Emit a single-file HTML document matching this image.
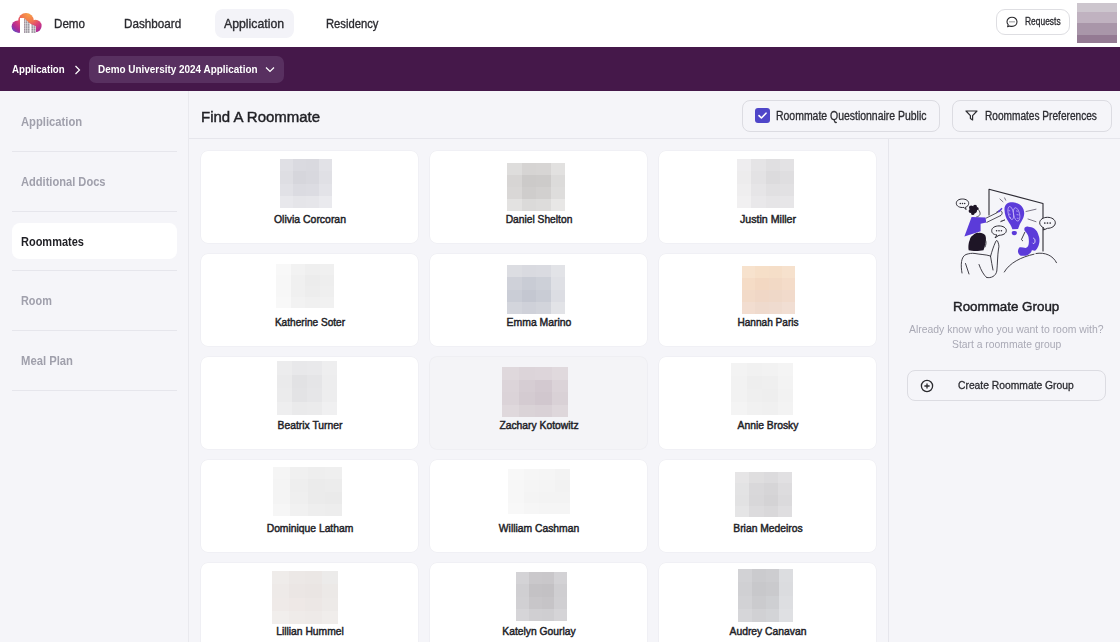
<!DOCTYPE html>
<html><head><meta charset="utf-8">
<style>
*{box-sizing:border-box;margin:0;padding:0}
html,body{width:1120px;height:642px;overflow:hidden;background:#f5f5f9;font-family:"Liberation Sans",sans-serif;color:#1f1f23}
.abs{position:absolute}
.t{position:absolute;white-space:nowrap;line-height:1;transform-origin:0 0}
.card{position:absolute;width:217px;height:92px;border-radius:7px;box-shadow:0 0 0 0.6px #ececf1}
.av{position:absolute;display:grid;filter:blur(0.6px)}
.av i{display:block}
</style></head><body>
<div class="abs" style="left:0;top:0;width:1120px;height:47px;background:#fff"></div>
<div class="abs" style="left:0;top:47px;width:1120px;height:44px;background:#45184a"></div>
<!-- logo -->
<svg class="abs" style="left:10px;top:12px" width="32" height="22" viewBox="0 0 32 22">
  <defs>
    <radialGradient id="lg" gradientUnits="userSpaceOnUse" cx="19" cy="2" r="25">
      <stop offset="0" stop-color="#f6a048"/>
      <stop offset="0.3" stop-color="#f2784f"/>
      <stop offset="0.55" stop-color="#d93e7c"/>
      <stop offset="0.78" stop-color="#aa2a98"/>
      <stop offset="1" stop-color="#3b63d8"/>
    </radialGradient>
    <pattern id="st" width="2" height="1.7" patternUnits="userSpaceOnUse">
      <rect x="0" y="0" width="2" height="1.7" fill="#fff"/>
      <rect x="0.1" y="0.3" width="1.4" height="0.9" fill="#2a2030" opacity="0.85"/>
    </pattern>
  </defs>
  <circle cx="7.6" cy="14.6" r="6" fill="url(#lg)"/>
  <circle cx="16" cy="8.8" r="7.8" fill="url(#lg)"/>
  <circle cx="25.4" cy="14" r="6.2" fill="url(#lg)"/>
  <rect x="7.6" y="12" width="18" height="8.8" fill="url(#lg)"/>
  <path d="M10 21 L10 6 L14.1 6 L14.1 21 Z" fill="#fff"/>
  <path d="M14.1 21 L14.1 6 L20 11.4 L20 21 Z" fill="url(#st)"/>
  <path d="M20 21 L20 11.6 L21 12 L21 21 Z" fill="#fff"/>
  <path d="M21 21 L21 12 L26 14.2 L26 21 Z" fill="url(#st)"/>
</svg>

<div class="abs" style="left:215px;top:9px;width:79px;height:29px;background:#f3f3f8;border-radius:8px"></div>
<div class="abs" style="left:996px;top:9px;width:74px;height:26px;border:1px solid #dedee2;border-radius:9px;background:#fff"></div>
<svg class="abs" style="left:1005px;top:16px" width="14" height="12" viewBox="0 0 14 12">
  <path d="M2.6 10.8 L3.2 8.6 C2.4 7.8 2 6.8 2 5.8 C2 3.2 4.2 1.2 7 1.2 C9.8 1.2 12 3.2 12 5.8 C12 8.4 9.8 10.4 7 10.4 C6.1 10.4 5.3 10.2 4.6 9.9 Z" fill="none" stroke="#2a2a2e" stroke-width="1.1" stroke-linejoin="round"/>
  <circle cx="5" cy="5.8" r="0.6" fill="#2a2a2e"/><circle cx="7" cy="5.8" r="0.6" fill="#2a2a2e"/><circle cx="9" cy="5.8" r="0.6" fill="#2a2a2e"/>
</svg>
<div class="abs" style="left:1077px;top:3px;width:40px;height:40px;background:linear-gradient(#cdc6ce 0,#cdc6ce 22%,#c0b2c0 22%,#c0b2c0 50%,#a996a9 50%,#a996a9 79%,#947a93 79%)"></div>
<!-- breadcrumb -->
<svg class="abs" style="left:74px;top:65px" width="7" height="10" viewBox="0 0 7 10"><path d="M1.5 1 L5.5 5 L1.5 9" fill="none" stroke="#fff" stroke-width="1.2"/></svg>
<div class="abs" style="left:89px;top:56px;width:195px;height:27px;background:#583060;border-radius:7px"></div>
<svg class="abs" style="left:265px;top:66px" width="10" height="7" viewBox="0 0 10 7"><path d="M1 1.5 L5 5.5 L9 1.5" fill="none" stroke="#fff" stroke-width="1.2"/></svg>
<!-- sidebar -->
<div class="abs" style="left:188px;top:91px;width:1px;height:551px;background:#e9e9ee"></div>
<div class="abs" style="left:12px;top:151px;width:165px;height:1px;background:#e6e6ec"></div>
<div class="abs" style="left:12px;top:211px;width:165px;height:1px;background:#e6e6ec"></div>
<div class="abs" style="left:12px;top:223px;width:165px;height:36px;background:#fff;border-radius:8px"></div>
<div class="abs" style="left:12px;top:270px;width:165px;height:1px;background:#e6e6ec"></div>
<div class="abs" style="left:12px;top:330px;width:165px;height:1px;background:#e6e6ec"></div>
<div class="abs" style="left:12px;top:390px;width:165px;height:1px;background:#e6e6ec"></div>
<!-- header -->
<div class="abs" style="left:189px;top:138px;width:931px;height:1px;background:#e6e6ec"></div>
<div class="abs" style="left:742px;top:100px;width:198px;height:32px;border:1px solid #dcdce2;border-radius:8px"></div>
<div class="abs" style="left:755px;top:108px;width:15px;height:15px;background:#4f46c9;border-radius:3px"></div>
<svg class="abs" style="left:755px;top:108px" width="15" height="15" viewBox="0 0 15 15"><path d="M4 7.6 L6.4 10 L11 5.2" fill="none" stroke="#fff" stroke-width="1.6" stroke-linecap="round" stroke-linejoin="round"/></svg>
<div class="abs" style="left:952px;top:100px;width:160px;height:32px;border:1px solid #dcdce2;border-radius:8px"></div>
<svg class="abs" style="left:965px;top:110px" width="13" height="11" viewBox="0 0 13 11"><path d="M1 1 L12 1 L7.6 5.6 L7.6 10 L5.4 8.6 L5.4 5.6 Z" fill="none" stroke="#2a2a2e" stroke-width="1.2" stroke-linejoin="round"/></svg>
<!-- right panel -->
<div class="abs" style="left:888px;top:139px;width:1px;height:503px;background:#e6e6ec"></div>
<div class="abs" style="left:907px;top:370px;width:199px;height:31px;border:1px solid #dcdce2;border-radius:8px"></div>
<svg class="abs" style="left:920px;top:379px" width="14" height="14" viewBox="0 0 14 14"><circle cx="7" cy="7" r="5.6" fill="none" stroke="#2a2a2e" stroke-width="1.3"/><path d="M7 4.4 V9.6 M4.4 7 H9.6" stroke="#2a2a2e" stroke-width="1.3"/></svg>
<svg class="abs" style="left:945px;top:180px" width="120" height="105" viewBox="945 180 120 105">
 <g fill="none" stroke="#2c2a33" stroke-width="1" stroke-linecap="round" stroke-linejoin="round">
  <polyline points="989,215 989,189.3 1043,203.5 1043,251" stroke-width="1.1"/>
  <line x1="1026" y1="211.5" x2="1036" y2="209.2" stroke="#5a5568" stroke-width="0.8"/>
  <line x1="1028" y1="219" x2="1036" y2="221.7" stroke="#5a5568" stroke-width="0.8"/>
  <line x1="999.9" y1="199" x2="1003" y2="201.8" stroke="#5a5568" stroke-width="0.8"/>
  <line x1="1004.6" y1="197.9" x2="1005.7" y2="200.2" stroke="#5a5568" stroke-width="0.8"/>
  <line x1="1001" y1="221.2" x2="1004.6" y2="220" stroke="#5a5568" stroke-width="0.8"/>
 </g>
 <!-- bulb -->
 <path d="M1004.5,210 C1004,204 1008.5,202 1013,202.3 C1019.5,202.8 1024.5,207.5 1024.2,213.5 C1024,218.5 1021,221.5 1019.5,225 C1018.8,227 1018.3,228.5 1018,229 L1012.4,229.3 C1011.5,226 1009.5,223.5 1008,221 C1006,218 1004.7,214.5 1004.5,210 Z" fill="#5b3bd9"/>
 <path d="M1011.8,232 C1012.5,230.8 1016,230.8 1016.8,232 C1017.2,233.5 1016.3,235.3 1014.3,235.3 C1012.3,235.3 1011.4,233.5 1011.8,232 Z" fill="#5b3bd9"/>
 <g fill="none" stroke="#c9b9f7" stroke-width="0.75">
  <ellipse cx="1010.8" cy="213" rx="2.6" ry="6.6" transform="rotate(-12 1010.8 213)"/>
  <ellipse cx="1016.6" cy="214.4" rx="3" ry="6.8" transform="rotate(-12 1016.6 214.4)"/>
  <path d="M1008.6,210.5 l1.6,0.4 M1008.8,214 l1.8,0.3 M1009.4,217.5 l1.6,0.2 M1016,210.8 l1.8,0.6 M1016.6,214.6 l2,0.3 M1016.8,218.2 l1.8,0.2"/>
 </g>
 <!-- bubbles -->
 <g fill="#f5f5f9" stroke="#2c2a33" stroke-width="1">
  <path d="M964,207.4 C959.5,208 956.3,206 956.3,203.3 C956.3,200.5 959,199 962.5,199 C966,199 968.7,200.8 968.7,203.3 C968.7,205.2 967.5,206.6 965.5,207.2 L966,209.6 Z"/>
  <path d="M997,235 C993,234.5 991.7,232.8 991.7,230.6 C991.7,227.8 995,225.9 999,225.9 C1003,225.9 1006.3,227.8 1006.3,230.6 C1006.3,233.4 1003,235.3 999,235.3 L995,237.9 Z"/>
  <path d="M1044,228 C1041.5,226.8 1039.7,225 1039.7,222.8 C1039.7,219.6 1043.2,217.3 1047.5,217.3 C1051.8,217.3 1055.3,219.6 1055.3,222.8 C1055.3,226 1051.8,228.3 1047.5,228.3 L1043.5,230 Z"/>
 </g>
 <g fill="#2c2a33">
  <circle cx="960.3" cy="203.5" r="0.75"/><circle cx="962.5" cy="203.5" r="0.75"/><circle cx="964.7" cy="203.5" r="0.75"/>
  <circle cx="996.6" cy="230.8" r="0.8"/><circle cx="999" cy="230.8" r="0.8"/><circle cx="1001.4" cy="230.8" r="0.8"/>
  <circle cx="1044.8" cy="223" r="0.85"/><circle cx="1047.5" cy="223" r="0.85"/><circle cx="1050.2" cy="223" r="0.85"/>
 </g>
 <!-- small person -->
 <path d="M971.6,216.9 L985.6,217.5 L986.2,222.5 L980.6,223.7 L980.6,231.2 L964.4,236.6 Z" fill="#5b3bd9"/>
 <g fill="none" stroke="#2c2a33" stroke-width="0.8" stroke-linecap="round" stroke-linejoin="round">
  <path d="M986.2,218.1 L997.5,212.5"/>
  <path d="M986.9,222.3 L1000.6,215.6"/>
  <path d="M996.5,212.2 C998.5,210.5 1001,210 1002,212 C1002.5,213.5 1001.8,215 1000.6,215.6"/>
  <path d="M978.1,209.4 C979.8,211 980.4,213 980,214.4 C979.2,216 977.8,216.8 976.8,216.8"/>
  <path d="M1000.8,221.6 L1004.6,220"/>
 </g>
 <line x1="998.7" y1="211.6" x2="1001.6" y2="208.7" stroke="#5b3bd9" stroke-width="1.6" stroke-linecap="round"/>
 <g fill="#1e1526">
  <circle cx="973.7" cy="210" r="3.4"/>
  <circle cx="971.2" cy="207.6" r="2.2"/><circle cx="975" cy="206.8" r="2"/><circle cx="970.6" cy="211" r="2"/><circle cx="972.8" cy="213.4" r="1.7"/><circle cx="977" cy="208.5" r="1.6"/>
 </g>
 <!-- woman -->
 <path d="M968.7,250.3 C968,246 968.8,242 969.6,240.4 C970.2,237.5 971.5,236 973,235.3 C974.5,233.5 976.5,232.6 978.3,232.9 C980.8,232.3 983.8,233.4 985.2,235.3 C986.3,237.5 986,240 985.6,242.1 C985.2,245 984.4,248 983.5,250.3 C979,251.2 972.5,251.2 968.7,250.3 Z" fill="#1e1526"/>
 <g fill="none" stroke="#2c2a33" stroke-width="0.9" stroke-linecap="round" stroke-linejoin="round">
  <path d="M985.5,240 C986.5,242 986,245 985,247"/>
  <path d="M962,273 C960.5,265 961,256.5 966,254.5 C969,253.5 972,253 975,253.5 C980,254.5 986,254.5 990.5,256 C991.5,261 992,266 993,270"/>
  <path d="M990.5,256.5 C992,251 993.5,246.5 995.5,242 C996,240.5 997,240 997.5,241 C998.5,243.5 999.5,246 998.5,249 C997.5,255 997.5,265 996.8,271 C996,276 991,278.5 986.7,277.5"/>
  <path d="M965.5,263.5 L969,274"/>
  <path d="M979,264.5 C981,270 983.5,275 986.7,277.5"/>
 </g>
 <!-- man -->
 <path d="M1024.8,227.6 C1026,226.6 1027,226.5 1028.3,226.7 C1030.5,226.8 1032.5,227.3 1034.2,228.4 C1036.5,230.2 1038,232.5 1038.5,235.3 C1039.5,237.5 1039.6,240 1039.4,242.1 C1039,245 1038,247.3 1036.8,249 L1035.1,250.7 C1033.5,250.5 1032.5,250 1031.7,250.5 C1031.5,251.5 1031,252.5 1030,253.3 C1028.5,255 1026.5,255.8 1024.8,255.8 C1022.5,256 1020.5,255.8 1019.7,255 C1018.3,253.5 1017.8,252 1018,250.7 C1018.3,249 1019,247.8 1019.7,247.3 C1021.5,247 1023.5,247.6 1025.7,248.1 C1027,247.5 1028,246.5 1028.5,245 C1029,243 1029,240 1028.5,237 C1028,234.5 1026.5,232.5 1024.8,231 C1024.2,230 1024.2,228.5 1024.8,227.6 Z" fill="#5b3bd9"/>
 <path d="M1033.2,238 C1034.8,238.5 1035.5,240.5 1034.8,242.5 C1034.2,243.8 1033,243.8 1032.5,242.8" fill="none" stroke="#f5f5f9" stroke-width="0.8"/>
 <g fill="none" stroke="#2c2a33" stroke-width="0.9" stroke-linecap="round" stroke-linejoin="round">
  <path d="M1024.8,232.3 L1021.4,239.6 L1022.7,240.8"/>
  <path d="M1004.3,272 C1009.5,263 1021,257 1034,254.2"/>
  <path d="M1036,253.5 C1045,252 1053,255.5 1056.5,262.7"/>
 </g>
</svg>

<div class="card" style="left:201px;top:151px;background:#ffffff;"></div>
<div class="av" style="left:280px;top:159px;width:52px;height:49px;grid-template-columns:repeat(4,1fr);grid-template-rows:repeat(4,1fr)"><i style="background:#e0e0e5"></i><i style="background:#dadae0"></i><i style="background:#d9d9df"></i><i style="background:#e2e2e7"></i><i style="background:#dedee3"></i><i style="background:#d6d6dc"></i><i style="background:#d8d8de"></i><i style="background:#e0e0e5"></i><i style="background:#e1e1e6"></i><i style="background:#dbdbe1"></i><i style="background:#dcdce2"></i><i style="background:#e3e3e8"></i><i style="background:#e8e8ec"></i><i style="background:#e5e5e9"></i><i style="background:#e6e6ea"></i><i style="background:#eaeaee"></i></div>
<div class="t" id="nm00" style="left:309.50px;top:213.59px;font-size:10.6px;font-weight:400;color:#222227;-webkit-text-stroke:0.45px #222227;transform-origin:50% 0;transform:translateX(-50%) scaleX(0.9863)">Olivia Corcoran</div>
<div class="card" style="left:430px;top:151px;background:#ffffff;"></div>
<div class="av" style="left:507px;top:163px;width:58px;height:48px;grid-template-columns:repeat(4,1fr);grid-template-rows:repeat(4,1fr)"><i style="background:#dedddc"></i><i style="background:#d6d4d3"></i><i style="background:#d7d5d4"></i><i style="background:#e2e1e0"></i><i style="background:#d7d5d4"></i><i style="background:#cccac9"></i><i style="background:#cdcbca"></i><i style="background:#dcdbda"></i><i style="background:#d9d7d6"></i><i style="background:#cfcdcc"></i><i style="background:#d2d0cf"></i><i style="background:#dedddc"></i><i style="background:#e3e2e1"></i><i style="background:#dbdad9"></i><i style="background:#dddcdb"></i><i style="background:#e8e7e6"></i></div>
<div class="t" id="nm01" style="left:538.50px;top:213.59px;font-size:10.6px;font-weight:400;color:#222227;-webkit-text-stroke:0.45px #222227;transform-origin:50% 0;transform:translateX(-50%) scaleX(0.9681)">Daniel Shelton</div>
<div class="card" style="left:659px;top:151px;background:#ffffff;"></div>
<div class="av" style="left:737px;top:159px;width:57px;height:49px;grid-template-columns:repeat(4,1fr);grid-template-rows:repeat(4,1fr)"><i style="background:#eeedef"></i><i style="background:#e5e4e6"></i><i style="background:#e0dfe1"></i><i style="background:#e3e2e4"></i><i style="background:#edeced"></i><i style="background:#e3e2e4"></i><i style="background:#dcdbdd"></i><i style="background:#dfdee0"></i><i style="background:#efeeef"></i><i style="background:#e6e5e7"></i><i style="background:#e1e0e2"></i><i style="background:#e2e1e3"></i><i style="background:#f1f0f1"></i><i style="background:#e9e8ea"></i><i style="background:#e6e5e7"></i><i style="background:#e7e6e8"></i></div>
<div class="t" id="nm02" style="left:767.50px;top:213.59px;font-size:10.6px;font-weight:400;color:#222227;-webkit-text-stroke:0.45px #222227;transform-origin:50% 0;transform:translateX(-50%) scaleX(1.0036)">Justin Miller</div>
<div class="card" style="left:201px;top:254px;background:#ffffff;"></div>
<div class="av" style="left:276px;top:264px;width:58px;height:44px;grid-template-columns:repeat(4,1fr);grid-template-rows:repeat(4,1fr)"><i style="background:#f8f8f8"></i><i style="background:#f2f2f2"></i><i style="background:#efefef"></i><i style="background:#f0f0f0"></i><i style="background:#f7f7f7"></i><i style="background:#f0f0f0"></i><i style="background:#ececec"></i><i style="background:#eeeeee"></i><i style="background:#f7f7f7"></i><i style="background:#f0f0f0"></i><i style="background:#ededed"></i><i style="background:#efefef"></i><i style="background:#f8f8f8"></i><i style="background:#f2f2f2"></i><i style="background:#f0f0f0"></i><i style="background:#f1f1f1"></i></div>
<div class="t" id="nm10" style="left:309.50px;top:316.59px;font-size:10.6px;font-weight:400;color:#222227;-webkit-text-stroke:0.45px #222227;transform-origin:50% 0;transform:translateX(-50%) scaleX(0.9541)">Katherine Soter</div>
<div class="card" style="left:430px;top:254px;background:#ffffff;"></div>
<div class="av" style="left:507px;top:265px;width:58px;height:49px;grid-template-columns:repeat(4,1fr);grid-template-rows:repeat(4,1fr)"><i style="background:#dcdde2"></i><i style="background:#d9dae0"></i><i style="background:#dadbe1"></i><i style="background:#e2e3e7"></i><i style="background:#cfd1d9"></i><i style="background:#c9ccd5"></i><i style="background:#cdd0d8"></i><i style="background:#dfe0e5"></i><i style="background:#cacdd6"></i><i style="background:#c4c7d1"></i><i style="background:#c9ccd5"></i><i style="background:#dcdde3"></i><i style="background:#d3d5dc"></i><i style="background:#cfd1d9"></i><i style="background:#d2d4db"></i><i style="background:#e2e3e7"></i></div>
<div class="t" id="nm11" style="left:538.50px;top:316.59px;font-size:10.6px;font-weight:400;color:#222227;-webkit-text-stroke:0.45px #222227;transform-origin:50% 0;transform:translateX(-50%) scaleX(0.9833)">Emma Marino</div>
<div class="card" style="left:659px;top:254px;background:#ffffff;"></div>
<div class="av" style="left:742px;top:266px;width:53px;height:48px;grid-template-columns:repeat(4,1fr);grid-template-rows:repeat(4,1fr)"><i style="background:#f7e2cd"></i><i style="background:#f6dfc8"></i><i style="background:#f5dec8"></i><i style="background:#f6e1cd"></i><i style="background:#f5dcc6"></i><i style="background:#f3d8c2"></i><i style="background:#f2d9c5"></i><i style="background:#f4dcc9"></i><i style="background:#f2dac8"></i><i style="background:#f0d7c6"></i><i style="background:#efd8c8"></i><i style="background:#f1dacb"></i><i style="background:#f2ddd0"></i><i style="background:#efdacd"></i><i style="background:#efdbcf"></i><i style="background:#f1ded3"></i></div>
<div class="t" id="nm12" style="left:767.50px;top:316.59px;font-size:10.6px;font-weight:400;color:#222227;-webkit-text-stroke:0.45px #222227;transform-origin:50% 0;transform:translateX(-50%) scaleX(0.9516)">Hannah Paris</div>
<div class="card" style="left:201px;top:357px;background:#ffffff;"></div>
<div class="av" style="left:277px;top:361px;width:60px;height:54px;grid-template-columns:repeat(4,1fr);grid-template-rows:repeat(4,1fr)"><i style="background:#ececed"></i><i style="background:#e8e8ea"></i><i style="background:#e9e9eb"></i><i style="background:#eeeeef"></i><i style="background:#eaeaeb"></i><i style="background:#e2e2e4"></i><i style="background:#e5e5e7"></i><i style="background:#ededee"></i><i style="background:#ebebec"></i><i style="background:#e3e3e5"></i><i style="background:#e6e6e8"></i><i style="background:#ededee"></i><i style="background:#eeeeef"></i><i style="background:#eaeaeb"></i><i style="background:#ebebec"></i><i style="background:#f0f0f1"></i></div>
<div class="t" id="nm20" style="left:309.50px;top:419.59px;font-size:10.6px;font-weight:400;color:#222227;-webkit-text-stroke:0.45px #222227;transform-origin:50% 0;transform:translateX(-50%) scaleX(0.9745)">Beatrix Turner</div>
<div class="card" style="left:430px;top:357px;background:#f4f4f7;box-shadow:0 0 0 0.8px #ededf1;"></div>
<div class="av" style="left:502px;top:367px;width:66px;height:50px;grid-template-columns:repeat(4,1fr);grid-template-rows:repeat(4,1fr)"><i style="background:#dfd8dc"></i><i style="background:#dcd4d9"></i><i style="background:#ddd5da"></i><i style="background:#e0d9dd"></i><i style="background:#dcd4d9"></i><i style="background:#d6cdd3"></i><i style="background:#d3c9d0"></i><i style="background:#dbd3d8"></i><i style="background:#dbd3d8"></i><i style="background:#d4cbd1"></i><i style="background:#d1c7ce"></i><i style="background:#d9d1d6"></i><i style="background:#dfd8dc"></i><i style="background:#dad3d7"></i><i style="background:#d9d1d6"></i><i style="background:#ded7db"></i></div>
<div class="t" id="nm21" style="left:538.50px;top:419.59px;font-size:10.6px;font-weight:400;color:#222227;-webkit-text-stroke:0.45px #222227;transform-origin:50% 0;transform:translateX(-50%) scaleX(0.9745)">Zachary Kotowitz</div>
<div class="card" style="left:659px;top:357px;background:#ffffff;"></div>
<div class="av" style="left:731px;top:363px;width:62px;height:52px;grid-template-columns:repeat(4,1fr);grid-template-rows:repeat(4,1fr)"><i style="background:#f3f3f3"></i><i style="background:#f1f1f1"></i><i style="background:#f2f2f2"></i><i style="background:#f4f4f4"></i><i style="background:#f2f2f2"></i><i style="background:#eeeeee"></i><i style="background:#efefef"></i><i style="background:#f3f3f3"></i><i style="background:#f2f2f2"></i><i style="background:#efefef"></i><i style="background:#eeeeee"></i><i style="background:#f2f2f2"></i><i style="background:#f4f4f4"></i><i style="background:#f1f1f1"></i><i style="background:#f0f0f0"></i><i style="background:#f3f3f3"></i></div>
<div class="t" id="nm22" style="left:767.50px;top:419.59px;font-size:10.6px;font-weight:400;color:#222227;-webkit-text-stroke:0.45px #222227;transform-origin:50% 0;transform:translateX(-50%) scaleX(0.9745)">Annie Brosky</div>
<div class="card" style="left:201px;top:460px;background:#ffffff;"></div>
<div class="av" style="left:273px;top:467px;width:69px;height:49px;grid-template-columns:repeat(4,1fr);grid-template-rows:repeat(4,1fr)"><i style="background:#f5f5f5"></i><i style="background:#f0f0f0"></i><i style="background:#eeeeee"></i><i style="background:#efefef"></i><i style="background:#f4f4f4"></i><i style="background:#eeeeee"></i><i style="background:#ebebeb"></i><i style="background:#ececec"></i><i style="background:#f4f4f4"></i><i style="background:#efefef"></i><i style="background:#ebebeb"></i><i style="background:#eaeaea"></i><i style="background:#f6f6f6"></i><i style="background:#f1f1f1"></i><i style="background:#eeeeee"></i><i style="background:#ededed"></i></div>
<div class="t" id="nm30" style="left:309.50px;top:522.59px;font-size:10.6px;font-weight:400;color:#222227;-webkit-text-stroke:0.45px #222227;transform-origin:50% 0;transform:translateX(-50%) scaleX(0.9745)">Dominique Latham</div>
<div class="card" style="left:430px;top:460px;background:#ffffff;"></div>
<div class="av" style="left:508px;top:469px;width:62px;height:45px;grid-template-columns:repeat(4,1fr);grid-template-rows:repeat(4,1fr)"><i style="background:#f8f8f8"></i><i style="background:#f6f6f6"></i><i style="background:#f5f5f5"></i><i style="background:#f3f3f3"></i><i style="background:#f7f7f7"></i><i style="background:#f5f5f5"></i><i style="background:#f4f4f4"></i><i style="background:#f2f2f2"></i><i style="background:#f7f7f7"></i><i style="background:#f4f4f4"></i><i style="background:#f3f3f3"></i><i style="background:#f3f3f3"></i><i style="background:#f8f8f8"></i><i style="background:#f6f6f6"></i><i style="background:#f5f5f5"></i><i style="background:#f5f5f5"></i></div>
<div class="t" id="nm31" style="left:538.50px;top:522.59px;font-size:10.6px;font-weight:400;color:#222227;-webkit-text-stroke:0.45px #222227;transform-origin:50% 0;transform:translateX(-50%) scaleX(0.9745)">William Cashman</div>
<div class="card" style="left:659px;top:460px;background:#ffffff;"></div>
<div class="av" style="left:735px;top:472px;width:57px;height:45px;grid-template-columns:repeat(4,1fr);grid-template-rows:repeat(4,1fr)"><i style="background:#e6e5e6"></i><i style="background:#dfdedf"></i><i style="background:#dcdbdd"></i><i style="background:#e1e0e2"></i><i style="background:#e3e3e4"></i><i style="background:#d9d8da"></i><i style="background:#d6d5d7"></i><i style="background:#dddcde"></i><i style="background:#e2e2e3"></i><i style="background:#d8d7d9"></i><i style="background:#d4d3d5"></i><i style="background:#dbdadc"></i><i style="background:#e5e5e6"></i><i style="background:#dcdbdd"></i><i style="background:#d9d8da"></i><i style="background:#dfdee0"></i></div>
<div class="t" id="nm32" style="left:767.50px;top:522.59px;font-size:10.6px;font-weight:400;color:#222227;-webkit-text-stroke:0.45px #222227;transform-origin:50% 0;transform:translateX(-50%) scaleX(0.9745)">Brian Medeiros</div>
<div class="card" style="left:201px;top:563px;background:#ffffff;"></div>
<div class="av" style="left:272px;top:571px;width:66px;height:53px;grid-template-columns:repeat(4,1fr);grid-template-rows:repeat(4,1fr)"><i style="background:#efecea"></i><i style="background:#ece8e6"></i><i style="background:#ebe7e5"></i><i style="background:#ecebea"></i><i style="background:#eeeae8"></i><i style="background:#ebe6e4"></i><i style="background:#eae5e3"></i><i style="background:#ece9e7"></i><i style="background:#efeae8"></i><i style="background:#eee8e6"></i><i style="background:#ece7e5"></i><i style="background:#edeae8"></i><i style="background:#f1eeec"></i><i style="background:#efebe9"></i><i style="background:#eeeae8"></i><i style="background:#f0edeb"></i></div>
<div class="t" id="nm40" style="left:309.50px;top:625.59px;font-size:10.6px;font-weight:400;color:#222227;-webkit-text-stroke:0.45px #222227;transform-origin:50% 0;transform:translateX(-50%) scaleX(0.9745)">Lillian Hummel</div>
<div class="card" style="left:430px;top:563px;background:#ffffff;"></div>
<div class="av" style="left:516px;top:572px;width:51px;height:49px;grid-template-columns:repeat(4,1fr);grid-template-rows:repeat(4,1fr)"><i style="background:#d4d3d6"></i><i style="background:#cac8cb"></i><i style="background:#c9c7ca"></i><i style="background:#d3d2d5"></i><i style="background:#d0cfd2"></i><i style="background:#c4c2c5"></i><i style="background:#c3c1c4"></i><i style="background:#cfced1"></i><i style="background:#d1d0d3"></i><i style="background:#c8c6c9"></i><i style="background:#c6c4c7"></i><i style="background:#d0cfd2"></i><i style="background:#d6d5d8"></i><i style="background:#d0cfd2"></i><i style="background:#cfced1"></i><i style="background:#d5d4d7"></i></div>
<div class="t" id="nm41" style="left:538.50px;top:625.59px;font-size:10.6px;font-weight:400;color:#222227;-webkit-text-stroke:0.45px #222227;transform-origin:50% 0;transform:translateX(-50%) scaleX(0.9745)">Katelyn Gourlay</div>
<div class="card" style="left:659px;top:563px;background:#ffffff;"></div>
<div class="av" style="left:738px;top:569px;width:55px;height:53px;grid-template-columns:repeat(4,1fr);grid-template-rows:repeat(4,1fr)"><i style="background:#d2d2d5"></i><i style="background:#cbcbce"></i><i style="background:#cdcdd0"></i><i style="background:#dcdde0"></i><i style="background:#d0d0d3"></i><i style="background:#c8c8cb"></i><i style="background:#cacacd"></i><i style="background:#dbdcdf"></i><i style="background:#d2d2d5"></i><i style="background:#cbcbce"></i><i style="background:#cecfd2"></i><i style="background:#dddee1"></i><i style="background:#d6d6d9"></i><i style="background:#d1d1d4"></i><i style="background:#d3d4d7"></i><i style="background:#dfe0e3"></i></div>
<div class="t" id="nm42" style="left:767.50px;top:625.59px;font-size:10.6px;font-weight:400;color:#222227;-webkit-text-stroke:0.45px #222227;transform-origin:50% 0;transform:translateX(-50%) scaleX(0.9745)">Audrey Canavan</div>
<div class="t" id="n1" style="left:53.70px;top:16.95px;font-size:13px;font-weight:400;color:#2b2b30;-webkit-text-stroke:0.35px #2b2b30;transform:scaleX(0.8943)">Demo</div>
<div class="t" id="n2" style="left:124.25px;top:17.15px;font-size:13px;font-weight:400;color:#2b2b30;-webkit-text-stroke:0.35px #2b2b30;transform:scaleX(0.8984)">Dashboard</div>
<div class="t" id="n3" style="left:223.75px;top:17.15px;font-size:13px;font-weight:400;color:#2b2b30;-webkit-text-stroke:0.35px #2b2b30;transform:scaleX(0.9453)">Application</div>
<div class="t" id="n4" style="left:326.00px;top:17.15px;font-size:13px;font-weight:400;color:#2b2b30;-webkit-text-stroke:0.35px #2b2b30;transform:scaleX(0.8648)">Residency</div>
<div class="t" id="req" style="left:1024.60px;top:17.10px;font-size:10px;font-weight:400;color:#2b2b30;-webkit-text-stroke:0.3px #2b2b30;transform:scaleX(0.8429)">Requests</div>
<div class="t" id="b1" style="left:12.00px;top:63.52px;font-size:11.5px;font-weight:700;color:#ffffff;transform:scaleX(0.8413)">Application</div>
<div class="t" id="b2" style="left:98.00px;top:63.52px;font-size:11.5px;font-weight:700;color:#ffffff;transform:scaleX(0.8627)">Demo University 2024 Application</div>
<div class="t" id="s1" style="left:20.90px;top:115.50px;font-size:12px;font-weight:700;color:#a0a0ac;transform:scaleX(0.9369)">Application</div>
<div class="t" id="s2" style="left:21.20px;top:175.50px;font-size:12px;font-weight:700;color:#a0a0ac;transform:scaleX(0.9253)">Additional Docs</div>
<div class="t" id="s3" style="left:20.90px;top:235.60px;font-size:12px;font-weight:700;color:#1f1f24;transform:scaleX(0.9159)">Roommates</div>
<div class="t" id="s4" style="left:21.30px;top:295.00px;font-size:12px;font-weight:700;color:#a0a0ac;transform:scaleX(0.9059)">Room</div>
<div class="t" id="s5" style="left:21.30px;top:354.60px;font-size:12px;font-weight:700;color:#a0a0ac;transform:scaleX(0.9382)">Meal Plan</div>
<div class="t" id="h1" style="left:201.10px;top:108.53px;font-size:15.5px;font-weight:400;color:#1f1f24;-webkit-text-stroke:0.45px #1f1f24;transform:scaleX(0.9667)">Find A Roommate</div>
<div class="t" id="h2" style="left:775.90px;top:109.55px;font-size:12px;font-weight:400;color:#2b2b30;-webkit-text-stroke:0.3px #2b2b30;transform:scaleX(0.8711)">Roommate Questionnaire Public</div>
<div class="t" id="h3" style="left:985.20px;top:109.50px;font-size:12px;font-weight:400;color:#2b2b30;-webkit-text-stroke:0.3px #2b2b30;transform:scaleX(0.8429)">Roommates Preferences</div>
<div class="t" id="r1" style="left:953.00px;top:299.69px;font-size:13.3px;font-weight:400;color:#1f1f24;-webkit-text-stroke:0.45px #1f1f24;transform:scaleX(1.0057)">Roommate Group</div>
<div class="t" id="r2" style="left:909.10px;top:324.27px;font-size:10.5px;font-weight:400;color:#a9a9b5;transform:scaleX(0.9923)">Already know who you want to room with?</div>
<div class="t" id="r3" style="left:951.60px;top:339.07px;font-size:10.5px;font-weight:400;color:#a9a9b5;transform:scaleX(0.9856)">Start a roommate group</div>
<div class="t" id="r4" style="left:958.30px;top:379.59px;font-size:11.3px;font-weight:400;color:#2b2b30;-webkit-text-stroke:0.3px #2b2b30;transform:scaleX(0.9126)">Create Roommate Group</div>
</body></html>
